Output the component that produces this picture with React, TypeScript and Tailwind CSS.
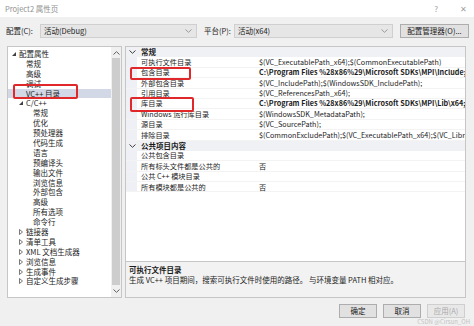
import React from "react"

type TreeItem = { t: string; lvl: number; exp?: boolean; col?: boolean; sel?: boolean }

const tree: TreeItem[] = [
  { t: "配置属性", lvl: 0, exp: true },
  { t: "常规", lvl: 1 },
  { t: "高级", lvl: 1 },
  { t: "调试", lvl: 1 },
  { t: "VC++ 目录", lvl: 1, sel: true },
  { t: "C/C++", lvl: 1, exp: true },
  { t: "常规", lvl: 2 },
  { t: "优化", lvl: 2 },
  { t: "预处理器", lvl: 2 },
  { t: "代码生成", lvl: 2 },
  { t: "语言", lvl: 2 },
  { t: "预编译头", lvl: 2 },
  { t: "输出文件", lvl: 2 },
  { t: "浏览信息", lvl: 2 },
  { t: "外部包含", lvl: 2 },
  { t: "高级", lvl: 2 },
  { t: "所有选项", lvl: 2 },
  { t: "命令行", lvl: 2 },
  { t: "链接器", lvl: 1, col: true },
  { t: "清单工具", lvl: 1, col: true },
  { t: "XML 文档生成器", lvl: 1, col: true },
  { t: "浏览信息", lvl: 1, col: true },
  { t: "生成事件", lvl: 1, col: true },
  { t: "自定义生成步骤", lvl: 1, col: true },
]

const indent = ["pl-[4px]", "pl-[11px]", "pl-[18px]"]

type Row = { head?: boolean; label: string; value?: string; bold?: boolean }

const rows: Row[] = [
  { head: true, label: "常规" },
  { label: "可执行文件目录", value: "$(VC_ExecutablePath_x64);$(CommonExecutablePath)" },
  { label: "包含目录", value: "C:\\Program Files %28x86%29\\Microsoft SDKs\\MPI\\Include;$(IncludePath)", bold: true },
  { label: "外部包含目录", value: "$(VC_IncludePath);$(WindowsSDK_IncludePath);" },
  { label: "引用目录", value: "$(VC_ReferencesPath_x64);" },
  { label: "库目录", value: "C:\\Program Files %28x86%29\\Microsoft SDKs\\MPI\\Lib\\x64;$(LibraryPath)", bold: true },
  { label: "Windows 运行库目录", value: "$(WindowsSDK_MetadataPath);" },
  { label: "源目录", value: "$(VC_SourcePath);" },
  { label: "排除目录", value: "$(CommonExcludePath);$(VC_ExecutablePath_x64);$(VC_LibraryPath_x64)" },
  { head: true, label: "公共项目内容" },
  { label: "公共包含目录", value: "" },
  { label: "所有标头文件都是公共的", value: "否" },
  { label: "公共 C++ 模块目录", value: "" },
  { label: "所有模块都是公共的", value: "否" },
]

function Chevron({ up = false, color = "#6d6d6d" }: { up?: boolean; color?: string }) {
  return (
    <svg width="7" height="4" viewBox="0 0 7 4" className={up ? "rotate-180" : ""}>
      <polyline points="0.5,0.5 3.5,3.3 6.5,0.5" fill="none" stroke={color} strokeWidth="1" />
    </svg>
  )
}

function Combo({ text, w }: { text: string; w: string }) {
  return (
    <div className={`${w} h-full bg-[#e6e6e6] border border-[#cfcfcf] flex items-center justify-between pl-[3px] pr-[4px]`}>
      <span>{text}</span>
      <Chevron color="#9a9a9a" />
    </div>
  )
}

export default function App() {
  return (
    <div className="w-[474px] h-[326px] bg-[#f0f0f0] text-[7.5px] text-[#1b1b1b] font-['Noto_Sans_CJK_SC','Noto_Sans',sans-serif] overflow-hidden relative">
      {/* title bar */}
      <div className="h-[17px] bg-white flex items-center justify-between pl-[5px] pr-[7px] text-[#8f8f8f]">
        <span>Project2 属性页</span>
        <div className="flex items-center gap-[22px] text-[8px] text-[#a0a0a0]">
          <span>?</span>
          <span>✕</span>
        </div>
      </div>

      {/* config row */}
      <div className="mt-[7px] h-[14px] flex items-center pl-[6px]">
        <span className="w-[34px]">配置(C):</span>
        <Combo text="活动(Debug)" w="w-[157px]" />
        <span className="ml-[7px] w-[30px]">平台(P):</span>
        <Combo text="活动(x64)" w="w-[159px]" />
        <div className="ml-[7px] w-[69px] h-full bg-[#e1e1e1] border border-[#adadad] flex items-center justify-center">
          配置管理器(O)...
        </div>
      </div>

      {/* main */}
      <div className="mt-[8px] h-[252px] flex pl-[7px] gap-[3px]">
        <div className="w-[115px] h-full bg-white border border-[#c6c6c6] flex relative">
          <div className="flex-1 pt-[2px] overflow-hidden">
            {tree.map((it, i) => (
              <div
                key={i}
                className={`h-[9.9px] leading-[9.9px] flex items-center whitespace-nowrap ${indent[it.lvl]} ${it.sel ? "bg-[#d2d8e6]" : ""}`}
              >
                <span className="w-[7px] flex items-center">
                  {it.exp && (
                    <svg width="4" height="4" viewBox="0 0 4 4">
                      <polygon points="4,0 4,4 0,4" fill="#404040" />
                    </svg>
                  )}
                  {it.col && (
                    <svg width="4" height="6" viewBox="0 0 4 6">
                      <polygon points="0.5,0.5 3.5,3 0.5,5.5" fill="none" stroke="#555" strokeWidth="0.8" />
                    </svg>
                  )}
                </span>
                <span>{it.t}</span>
              </div>
            ))}
          </div>
          <div className="w-[10px] h-full bg-[#f0f0f0] flex flex-col">
            <div className="h-[11px] flex items-center justify-center">
              <Chevron up color="#606060" />
            </div>
            <div className="flex-1 mx-[1px] bg-[#cdcdcd]" />
            <div className="h-[12px] flex items-center justify-center">
              <Chevron color="#606060" />
            </div>
          </div>
          <div className="absolute left-[5px] top-[37px] w-[65px] h-[15px] border-2 border-[#e0282a] rounded-[2px]" />
        </div>

        <div className="w-[341px] h-full flex flex-col">
          <div className="flex-1 bg-white border border-[#c6c6c6] relative overflow-hidden text-[7.2px]">
            {rows.map((r, i) =>
              r.head ? (
                <div key={i} className="h-[10.4px] leading-[10.4px] flex items-center bg-[#f0f1f5] font-bold text-[7.5px]">
                  <span className="w-[11px] flex justify-end pr-[1px]">
                    <Chevron color="#404040" />
                  </span>
                  <span className="pl-[4px]">{r.label}</span>
                </div>
              ) : (
                <div key={i} className="h-[10.4px] leading-[10.4px] flex items-center border-b border-[#f3f3f3]">
                  <span className="w-[11px] h-full bg-[#eef0f5]" />
                  <span className="w-[121px] pl-[4px] whitespace-nowrap">{r.label}</span>
                  <span className={`flex-1 pl-[1px] whitespace-nowrap overflow-hidden ${r.bold ? "font-bold" : ""}`}>
                    {r.value}
                  </span>
                </div>
              )
            )}
            <div className="absolute left-[4px] top-[20px] w-[61px] h-[13px] border-2 border-[#e0282a] rounded-[2px]" />
            <div className="absolute left-[4px] top-[50px] w-[64px] h-[15px] border-2 border-[#e0282a] rounded-[2px]" />
          </div>
          <div className="h-[36px] border border-t-0 border-[#c6c6c6] bg-[#f2f2f2] pl-[3px] pt-[3px] leading-[10px]">
            <div className="font-bold">可执行文件目录</div>
            <div>生成 VC++ 项目期间，搜索可执行文件时使用的路径。 与环境变量 PATH 相对应。</div>
          </div>
        </div>
      </div>

      {/* buttons */}
      <div className="mt-[6px] h-[14px] flex justify-end gap-[6px] pr-[9px]">
        <div className="w-[38px] h-full bg-[#e1e1e1] border border-[#adadad] flex items-center justify-center">确定</div>
        <div className="w-[38px] h-full bg-[#e1e1e1] border border-[#adadad] flex items-center justify-center">取消</div>
        <div className="w-[38px] h-full bg-[#e8e8e8] border border-[#cfcfcf] flex items-center justify-center text-[#a8a8a8]">
          应用(A)
        </div>
      </div>

      <div className="absolute right-[4px] bottom-[0px] leading-[8px] text-[6px] text-[#c2c2c2]">CSDN @Cirsun_OH</div>
    </div>
  )
}
